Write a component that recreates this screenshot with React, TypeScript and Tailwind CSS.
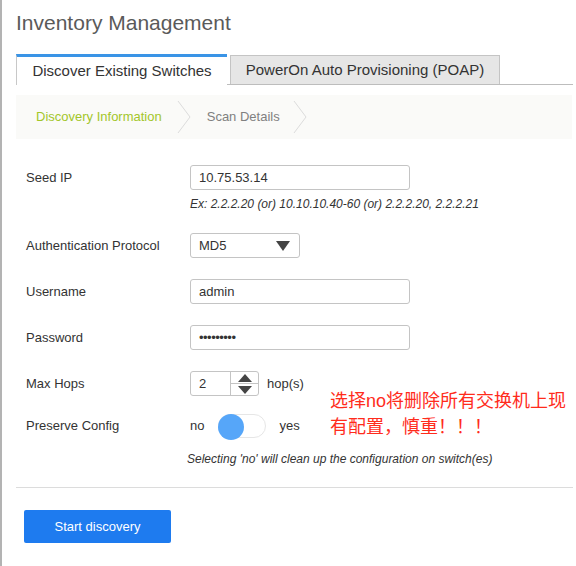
import React from "react";

const font = { fontFamily: '"Liberation Sans", Arial, sans-serif' };

function Chevron() {
  return (
    <svg width="14" height="34" viewBox="0 0 14 34" className="shrink-0">
      <path d="M1 1 L13 17 L1 33" fill="none" stroke="#dcdcdc" strokeWidth="1" />
    </svg>
  );
}

function Row({ label, children, className = "" }: { label: string; children: React.ReactNode; className?: string }) {
  return (
    <div className={`flex items-center ${className}`}>
      <div className="w-[174px] shrink-0 pl-[10px] text-[13px] text-[#333]">{label}</div>
      {children}
    </div>
  );
}

const inputCls = "h-[25px] border border-[#c4c4c4] rounded-[3px] px-[8px] flex items-center text-[13px] text-[#333] bg-white";

export default function App() {
  return (
    <div className="relative w-[576px] h-[566px] bg-white border-l-2 border-[#b3b3b3] overflow-hidden" style={font}>
      <div className="pl-[14px] w-[571px]">
        <h1 className="pt-[9px] text-[21px] leading-[28px] text-[#5a5a5a]">Inventory Management</h1>

        {/* tabs */}
        <div className="mt-[17px] flex items-end border-b border-[#bdbdbd] h-[31px]">
          <div className="h-[31px] w-[211px] -mb-px bg-white border-t-[3px] border-t-[#3a94e6] border-l border-l-[#c8c8c8] flex items-center justify-center text-[15px] text-[#333]">
            Discover Existing Switches
          </div>
          <div className="ml-[3px] h-[29px] w-[270px] bg-[#e6e6e6] border border-[#c4c4c4] border-b-0 flex items-center justify-center text-[15px] text-[#333]">
            PowerOn Auto Provisioning (POAP)
          </div>
        </div>

        {/* breadcrumb */}
        <div className="mt-[10px] h-[44px] bg-[#fafaf8] flex items-center pl-[20px] text-[13px] mr-px">
          <span className="text-[#a3c62a]">Discovery Information</span>
          <span className="ml-[15px] mr-[16px]"><Chevron /></span>
          <span className="text-[#808080]">Scan Details</span>
          <span className="ml-[13px]"><Chevron /></span>
        </div>

        {/* form */}
        <div className="pt-[26px]">
          <Row label="Seed IP">
            <div className={`${inputCls} w-[220px]`}>10.75.53.14</div>
          </Row>
          <div className="pl-[174px] mt-[5px] text-[12px] italic text-[#333]">
            Ex: 2.2.2.20 (or) 10.10.10.40-60 (or) 2.2.2.20, 2.2.2.21
          </div>

          <Row label="Authentication Protocol" className="mt-[20px]">
            <div className={`${inputCls} w-[110px] justify-between pr-[9px]`}>
              <span>MD5</span>
              <svg width="14" height="10" viewBox="0 0 14 10"><path d="M0 0 H14 L7 10 Z" fill="#444" /></svg>
            </div>
          </Row>

          <Row label="Username" className="mt-[21px]">
            <div className={`${inputCls} w-[220px]`}>admin</div>
          </Row>

          <Row label="Password" className="mt-[21px]">
            <div className={`${inputCls} w-[220px] text-[9px] tracking-[-0.5px]`}>•••••••••</div>
          </Row>

          <Row label="Max Hops" className="mt-[21px]">
            <div className="h-[25px] w-[69px] border border-[#c4c4c4] rounded-[3px] flex text-[13px] text-[#333]">
              <div className="w-[40px] flex items-center pl-[8px] border-r border-[#c4c4c4]">2</div>
              <div className="flex-1 flex flex-col">
                <div className="flex-1 flex items-center justify-center border-b border-[#c4c4c4]">
                  <svg width="14" height="8" viewBox="0 0 14 8"><path d="M0 8 H14 L7 0 Z" fill="#444" /></svg>
                </div>
                <div className="flex-1 flex items-center justify-center">
                  <svg width="14" height="8" viewBox="0 0 14 8"><path d="M0 0 H14 L7 8 Z" fill="#444" /></svg>
                </div>
              </div>
            </div>
            <span className="ml-[8px] text-[13px] text-[#333]">hop(s)</span>
          </Row>

          <Row label="Preserve Config" className="mt-[18px]">
            <div className="flex items-center text-[13px] text-[#333]">
              <span>no</span>
              <div className="ml-[14px] relative w-[48px] h-[24px] rounded-full border border-[#e6e6e6] bg-white">
                <div className="absolute -left-px -top-px w-[26px] h-[26px] rounded-full bg-[#56a6f9]" />
              </div>
              <span className="ml-[13px]">yes</span>
            </div>
          </Row>
          <div className="pl-[171px] mt-[12px] text-[12px] italic text-[#333]">
            Selecting 'no' will clean up the configuration on switch(es)
          </div>
        </div>

        <div className="mt-[19px] border-t border-[#dcdcdc]" />

        <div className="pt-[22px] pl-[8px]">
          <button className="w-[147px] h-[33px] bg-[#1e7bef] rounded-[2px] text-white text-[13px]">Start discovery</button>
        </div>
      </div>

      <div
        className="absolute left-[328px] top-[388px] text-[18px] leading-[26px] text-[#ff2c1c]"
        style={{ fontFamily: '"Liberation Sans", "Noto Sans CJK SC", sans-serif' }}
      >
        选择no将删除所有交换机上现
        <br />
        有配置，慎重！！！
      </div>
    </div>
  );
}
